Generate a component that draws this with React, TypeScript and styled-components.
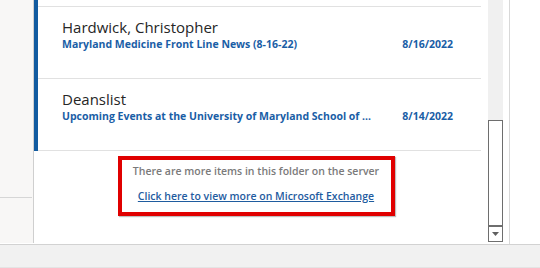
import styled, { createGlobalStyle } from "styled-components";

const GlobalStyle = createGlobalStyle`
  html, body {
    margin: 0;
    padding: 0;
    background: #ffffff;
  }
  * {
    box-sizing: border-box;
  }
`;

const messages = [
  {
    from: "Hardwick, Christopher",
    subject: "Maryland Medicine Front Line News (8-16-22)",
    date: "8/16/2022",
  },
  {
    from: "Deanslist",
    subject: "Upcoming Events at the University of Maryland School of ...",
    date: "8/14/2022",
  },
];

export default function App() {
  return (
    <>
      <GlobalStyle />
      <Window>
        <Main>
          <FolderPane>
            <FolderSection />
          </FolderPane>
          <ListPane>
            <List>
              <Row>
                <Bar />
                <PartialBody />
              </Row>
              {messages.map((m) => (
                <Row key={m.from}>
                  <Bar />
                  <RowBody>
                    <Sender>{m.from}</Sender>
                    <SubjectLine>
                      <Subject>{m.subject}</Subject>
                      <DateText>{m.date}</DateText>
                    </SubjectLine>
                  </RowBody>
                </Row>
              ))}
              <MoreArea>
                <Highlight>
                  <MoreNote>There are more items in this folder on the server</MoreNote>
                  <MoreLink href="#">Click here to view more on Microsoft Exchange</MoreLink>
                </Highlight>
              </MoreArea>
            </List>
            <Scrollbar>
              <Track />
              <Thumb />
              <DownButton>
                <svg width="7" height="4" viewBox="0 0 7 4">
                  <path d="M0 0 H7 L3.5 4 Z" fill="#606060" />
                </svg>
              </DownButton>
            </Scrollbar>
          </ListPane>
          <ReadingPane />
        </Main>
        <StatusBar />
      </Window>
    </>
  );
}

const Window = styled.div`
  width: 540px;
  height: 268px;
  display: flex;
  flex-direction: column;
  overflow: hidden;
  font-family: "Open Sans", "Noto Sans", sans-serif;
`;

const Main = styled.div`
  height: 245px;
  display: flex;
  border-bottom: 1px solid #d2d2d2;
`;

const FolderPane = styled.div`
  width: 34px;
  background: #f8f7f6;
  border-right: 1px solid #cfcfcf;
  margin-bottom: 1px;
`;

const FolderSection = styled.div`
  height: 198px;
  border-bottom: 1px solid #d6d6d6;
  margin-right: 1px;
`;

const ListPane = styled.div`
  width: 476px;
  display: flex;
  border-right: 1px solid #d8d8d8;
  padding-right: 6px;
`;

const List = styled.div`
  flex: 1;
  display: flex;
  flex-direction: column;
  padding-right: 7px;
`;

const Row = styled.div`
  display: flex;
`;

const Bar = styled.div`
  width: 4px;
  background: #125ba0;
`;

const PartialBody = styled.div`
  flex: 1;
  height: 7px;
  border-bottom: 1px solid #e1e1e1;
`;

const RowBody = styled.div`
  flex: 1;
  height: 72px;
  border-bottom: 1px solid #e1e1e1;
  padding: 10px 28px 0 24px;
  display: flex;
  flex-direction: column;
`;

const Sender = styled.div`
  font-size: 15px;
  line-height: 20px;
  color: #262626;
`;

const SubjectLine = styled.div`
  display: flex;
  justify-content: space-between;
  align-items: baseline;
  line-height: 14px;
`;

const Subject = styled.span`
  font-size: 10.5px;
  font-weight: 700;
  color: #1a5ea6;
  white-space: nowrap;
`;

const DateText = styled.span`
  font-size: 10.5px;
  font-weight: 700;
  color: #1a5ea6;
`;

const MoreArea = styled.div`
  flex: 1;
  display: flex;
  justify-content: center;
  align-items: flex-start;
  padding-top: 5px;
  margin-left: -3px;
`;

const Highlight = styled.div`
  width: 277px;
  height: 60px;
  border: 4px solid #e00000;
  box-shadow: 1px 1px 1px rgba(0, 0, 0, 0.25);
  display: flex;
  flex-direction: column;
  align-items: center;
  padding-top: 4px;
  gap: 10px;
  line-height: 15px;
`;

const MoreNote = styled.div`
  font-size: 10.5px;
  font-weight: 600;
  color: #7a7a7a;
`;

const MoreLink = styled.a`
  font-size: 10.5px;
  font-weight: 600;
  color: #1f5c9f;
  text-decoration: underline;
`;

const Scrollbar = styled.div`
  width: 15px;
  display: flex;
  flex-direction: column;
  padding-bottom: 2px;
`;

const Track = styled.div`
  height: 120px;
  background: #f0f0f0;
`;

const Thumb = styled.div`
  flex: 1;
  border: 1px solid #6e6e6e;
  border-bottom-width: 2px;
  background: #ffffff;
`;

const DownButton = styled.div`
  height: 15px;
  border: 1px solid #6e6e6e;
  border-top: none;
  display: flex;
  align-items: center;
  justify-content: center;
`;

const ReadingPane = styled.div`
  flex: 1;
  background: #ffffff;
`;

const StatusBar = styled.div`
  flex: 1;
  background: #f1f1f1;
  border-bottom: 1px solid #e4e4e4;
`;
